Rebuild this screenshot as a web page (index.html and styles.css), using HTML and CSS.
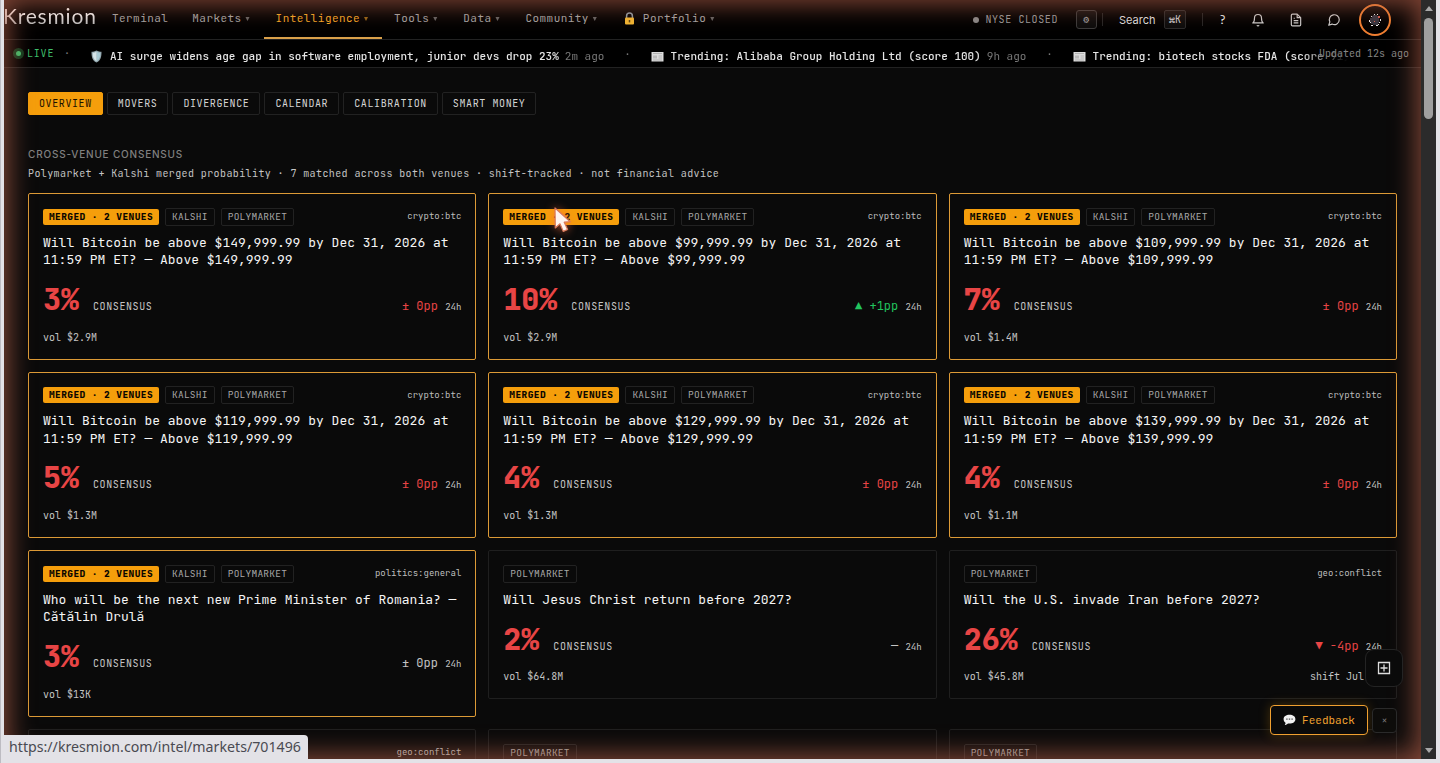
FILE: index.html
```html
<!DOCTYPE html>
<html lang="en">

<head>
    <meta charset="utf-8">
    <meta name="viewport" content="width=device-width, initial-scale=1.0">
    <title>Kresmion</title>
    <link rel="stylesheet" href="styles.css">
</head>

<body>
    <div class="viewport">
        <header class="topbar">
            <div class="logo">Kresmion</div>
            <nav class="nav">
                <a>Terminal</a>
                <a>Markets<i>▾</i></a>
                <a class="active">Intelligence<i>▾</i></a>
                <a>Tools<i>▾</i></a>
                <a>Data<i>▾</i></a>
                <a>Community<i>▾</i></a>
                <a><svg class="lock" width="13" height="13" viewBox="0 0 13 13"><path d="M3.6 6V4a2.9 2.9 0 0 1 5.8 0v2" fill="none" stroke="#8b9aa3" stroke-width="1.5"/><rect x="2" y="5.4" width="9" height="7" rx="1" fill="#f2b632"/><path d="M6.5 8v2.4" stroke="#5b4413" stroke-width="1.5"/></svg>Portfolio<i>▾</i></a>
            </nav>
            <div class="tools">
                <span class="market-state">NYSE CLOSED</span>
                <button class="gear">⚙</button>
                <span class="divider"></span>
                <span class="search">Search</span>
                <kbd>⌘K</kbd>
                <span class="divider second"></span>
                <span class="help">?</span>
                <svg class="icon" viewBox="0 0 24 24"><path d="M18 8.500a6 6 0 0 0-12 0c0 7-3 8.500-3 8.500h18s-3-1.500-3-8.500"/><path d="M13.800 21a2 2 0 0 1-3.600 0"/></svg>
                <svg class="icon" viewBox="0 0 24 24"><path d="M14 2H6a2 2 0 0 0-2 2v16a2 2 0 0 0 2 2h12a2 2 0 0 0 2-2V8z"/><path d="M14 2v6h6M8 13h8M8 17h8M8 9h2"/></svg>
                <svg class="icon" viewBox="0 0 24 24"><path d="M21 11.500a8.400 8.400 0 0 1-12.300 7.500L3 21l1.900-5.700A8.500 8.500 0 1 1 21 11.500z"/></svg>
                <span class="avatar">
                    <svg width="14" height="14" viewBox="0 0 14 14" shape-rendering="crispEdges"><path d="M5 2h4v1h2v7h-1v2H5v-1H3V9H2V5h2V3h1z" fill="#353540"/><path d="M10 3h2v2h-2zM6 8h1v1H6z" fill="#d4574a"/><path d="M6 1h1v1H6zM9 1h1v1H9zM3 3h1v1H3zM1 7h1v2H1zM2 9h1v1H2zM12 6h1v2h-1zM11 9h1v1h-1zM3 12h2v1H3zM8 12h2v1H8zM10 11h1v1h-1z" fill="#eee"/></svg>
                </span>
            </div>
        </header>

        <div class="ticker">
            <span class="live">LIVE</span>
            <span class="dot first">·</span>
            <div class="feed">
                <svg width="13" height="13" viewBox="0 0 13 13"><path d="M6.500 .5c1.700 1 3.400 1.200 5 1.200 0 5-.6 8.600-5 10.800C2.100 10.300 1.500 6.700 1.500 1.700c1.600 0 3.300-.2 5-1.200z" fill="#92a6ad"/><path d="M6.500 1.800c1.200.6 2.500.9 3.800 1 0 3.800-.6 6.700-3.800 8.400z" fill="#a9cbd5"/><path d="M6.500 1.800v9.400C3.300 9.500 2.700 6.600 2.700 2.800c1.300-.1 2.600-.4 3.800-1z" fill="#d5e4e8"/></svg>
                <b>AI surge widens age gap in software employment, junior devs drop 23%</b><em>2m ago</em>
                <span class="dot">·</span>
                <svg width="13" height="13" viewBox="0 0 13 13"><path d="M.5 2h12v9.500H.5z" fill="#dcdcdc"/><path d="M2 3.500h9M7.500 6H11M7.500 8H11M2 10h9" stroke="#b4b4b4"/><path d="M2 5.500h4v3H2z" fill="#bbb"/></svg>
                <b>Trending: Alibaba Group Holding Ltd (score 100)</b><em>9h ago</em>
                <span class="dot">·</span>
                <svg width="13" height="13" viewBox="0 0 13 13"><path d="M.5 2h12v9.500H.5z" fill="#dcdcdc"/><path d="M2 3.500h9M7.500 6H11M7.500 8H11M2 10h9" stroke="#b4b4b4"/><path d="M2 5.500h4v3H2z" fill="#bbb"/></svg>
                <b>Trending: biotech stocks FDA (score 91)</b>
            </div>
            <span class="updated">Updated 12s ago</span>
        </div>

        <main>
            <div class="tabs">
                <a class="selected">OVERVIEW</a>
                <a>MOVERS</a>
                <a>DIVERGENCE</a>
                <a>CALENDAR</a>
                <a>CALIBRATION</a>
                <a>SMART MONEY</a>
            </div>
            <h2>CROSS-VENUE CONSENSUS</h2>
            <p class="lead">Polymarket + Kalshi merged probability · 7 matched across both venues · shift-tracked · not financial advice</p>
            <div class="grid" id="cards"></div>
        </main>

        <div class="glow"></div>
        <button class="apps"><svg width="14" height="14" viewBox="0 0 14 14"><path d="M1.500 1.500h11v11h-11zM7 3.500v7M3.500 7h7" fill="none" stroke="#ddd" stroke-width="1.300"/></svg></button>
        <div class="feedback">
            <button class="feedback-btn"><svg width="13" height="12" viewBox="0 0 13 12"><path d="M6.500 .8c3.400 0 5.900 1.800 5.900 4.400S9.900 9.600 6.500 9.600c-.5 0-1 0-1.500-.1-.8.9-2 1.500-3.300 1.600.6-.7.900-1.500.8-2.400C1.300 7.800.6 6.600.6 5.200.6 2.600 3.100.8 6.500.8z" fill="#f2f2f2"/><path d="M3.200 5.200h1.400M5.800 5.200h1.400M8.400 5.200h1.400" stroke="#555" stroke-width="1.300"/></svg>Feedback</button>
            <button class="dismiss">×</button>
        </div>
        <svg class="cursor" width="26" height="34" viewBox="0 0 26 34"><path d="M5 4l.3 20 4.700-4.200 3.300 7.600 4.300-1.900-3.400-7.300 6-.5z" fill="#fff4ef" stroke="#d9785a" stroke-width="1.200" stroke-linejoin="round"/></svg>
    </div>

    <div class="scrollbar">
        <span class="arrow up"></span>
        <span class="thumb"></span>
        <span class="arrow down"></span>
    </div>
    <div class="link-status">https://kresmion.com/intel/markets/701496</div>

    <script>
        var both = ["KALSHI", "POLYMARKET"];
        var poly = ["POLYMARKET"];

        function btc(price, pct, move, dir, vol) {
            return {
                venues: both, topic: "crypto:btc", pct: pct, move: move, dir: dir, vol: vol,
                title: "Will Bitcoin be above $" + price + " by Dec 31, 2026 at 11:59 PM ET? — Above $" + price
            };
        }

        var markets = [
            btc("149,999.99", 3, "± 0pp", "down", "$2.9M"),
            btc("99,999.99", 10, "▲ +1pp", "up", "$2.9M"),
            btc("109,999.99", 7, "± 0pp", "down", "$1.4M"),
            btc("119,999.99", 5, "± 0pp", "down", "$1.3M"),
            btc("129,999.99", 4, "± 0pp", "down", "$1.3M"),
            btc("139,999.99", 4, "± 0pp", "down", "$1.1M"),
            { venues: both, topic: "politics:general", title: "Who will be the next new Prime Minister of Romania? — Cătălin Drulă", pct: 3, move: "± 0pp", dir: "", vol: "$13K" },
            { venues: poly, topic: "", title: "Will Jesus Christ return before 2027?", pct: 2, move: "—", dir: "", vol: "$64.8M" },
            { venues: poly, topic: "geo:conflict", title: "Will the U.S. invade Iran before 2027?", pct: 26, move: "▼ -4pp", dir: "down", vol: "$45.8M", shift: "shift Jul 12" },
            { venues: [], topic: "geo:conflict" },
            { venues: poly, topic: "" },
            { venues: poly, topic: "" }
        ];

        // Build one card per market
        var html = "";
        for (var i = 0; i < markets.length; i++) {
            var m = markets[i];
            var merged = m.venues.length > 1;
            html += '<article class="card' + (merged ? " merged" : "") + '"><div class="chips">';
            if (merged) {
                html += '<span class="badge">MERGED · 2 VENUES</span>';
            }
            for (var j = 0; j < m.venues.length; j++) {
                html += '<span class="chip">' + m.venues[j] + "</span>";
            }
            html += '<span class="topic">' + m.topic + "</span></div>";
            if (m.title) {
                html += "<h3>" + m.title + "</h3>" +
                    '<div class="odds"><strong>' + m.pct + '%</strong><span class="label">CONSENSUS</span>' +
                    '<span class="move"><span class="' + m.dir + '">' + m.move + "</span> <small>24h</small></span></div>" +
                    '<div class="foot"><span>vol ' + m.vol + "</span><span>" + (m.shift || "") + "</span></div>";
            }
            html += "</article>";
        }
        document.getElementById("cards").innerHTML = html;
    </script>
</body>

</html>
```
FILE: styles.css
```css
* {
    box-sizing: border-box;
}

body {
    margin: 0;
    height: 763px;
    padding: 0 4px 4px 3px;
    display: flex;
    overflow: hidden;
    background: #e3e2e7;
    border-left: 1px solid #bdbcc2;
    font-family: "JetBrains Mono", "DejaVu Sans Mono", monospace;
    color: #f5f5f5;
}

button {
    font-family: inherit;
    padding: 0;
}

.viewport {
    position: relative;
    flex: 1;
    min-width: 0;
    height: 759px;
    overflow: hidden;
    background: #0a0a0a;
}

/* header */
.topbar {
    height: 40px;
    display: flex;
    align-items: center;
    background: #000;
    border-bottom: 1px solid #222;
}

.logo {
    width: 96px;
    font: 400 21px "Lato", sans-serif;
    letter-spacing: 0.800px;
    text-indent: -1px;
    padding-bottom: 8px;
    color: transparent;
    background: linear-gradient(#fff 30%, #888 85%);
    background-clip: text;
}

.nav {
    display: flex;
    height: 39px;
}

.nav a {
    display: flex;
    align-items: center;
    padding: 0 12px 1px;
    border-bottom: 2px solid transparent;
    font-size: 11px;
    letter-spacing: 0.440px;
    color: #a3a3a3;
}

.nav i {
    width: 6px;
    margin-left: 4px;
    font-family: "DejaVu Sans", sans-serif;
    font-size: 8px;
    font-style: normal;
    letter-spacing: 0;
    opacity: 0.6;
}

.nav .active {
    color: #f5a524;
    border-color: #d9a04a;
}

.lock {
    margin-right: 7px;
}

.tools {
    margin-left: auto;
    margin-right: 30px;
    display: flex;
    align-items: center;
}

.market-state {
    display: flex;
    align-items: center;
    font-size: 10px;
    letter-spacing: 0.600px;
    color: #999;
}

.market-state::before {
    content: "";
    width: 6px;
    height: 6px;
    margin-right: 6px;
    border-radius: 50%;
    background: #888;
}

.gear {
    width: 21px;
    height: 19px;
    margin: 0 5px 0 18px;
    border: 1px solid #3a3a3a;
    border-radius: 3px;
    background: #0c0c0c;
    color: #aaa;
    font-size: 10px;
}

.divider {
    width: 1px;
    height: 13px;
    margin-right: 16px;
    background: #242424;
}

.divider.second {
    margin: 0 16px;
}

.search {
    width: 45px;
    font: 11px "Inter", sans-serif;
    color: #ddd;
}

kbd {
    width: 22px;
    height: 19px;
    border: 1px solid #2a2a2a;
    border-radius: 2px;
    background: #0c0c0c;
    font: 10px/17px "JetBrains Mono", "DejaVu Sans Mono", monospace;
    text-align: center;
    color: #ccc;
}

.help {
    width: 32px;
    font-size: 12px;
    color: #ddd;
}

.icon {
    width: 14px;
    height: 14px;
    margin-right: 24px;
    fill: none;
    stroke: #ccc;
    stroke-width: 2;
    stroke-linejoin: round;
}

.avatar {
    width: 32px;
    height: 32px;
    margin-left: -6px;
    display: flex;
    align-items: center;
    justify-content: center;
    border: 2px solid #ef7f32;
    border-radius: 50%;
}

/* news ticker */
.ticker {
    position: relative;
    height: 28px;
    display: flex;
    align-items: center;
    background: #000;
    border-bottom: 1px solid #222;
    overflow: hidden;
}

.live {
    width: 60px;
    padding-left: 12px;
    display: flex;
    align-items: center;
    font-size: 10px;
    letter-spacing: 0.800px;
    color: #3fbf6c;
}

.live::before {
    content: "";
    width: 5px;
    height: 5px;
    margin-right: 6px;
    border-radius: 50%;
    background: #3fbf6c;
    box-shadow: 0 0 0 3px #0d3a1d;
}

.dot {
    width: 46.500px;
    text-align: center;
    font-size: 10px;
    color: #777;
}

.dot.first {
    width: 6px;
    margin-right: 20px;
}

.feed {
    display: flex;
    align-items: center;
    width: 1260px;
    overflow: hidden;
    white-space: nowrap;
    font-size: 11px;
    padding-top: 5px;
    -webkit-mask-image: linear-gradient(90deg, #000 1210px, transparent 1258px);
    mask-image: linear-gradient(90deg, #000 1210px, transparent 1258px);
}

.feed svg {
    flex: none;
    margin-right: 7px;
}

.feed b {
    font-weight: 500;
    color: #e5e5e5;
}

.feed em {
    margin-left: 6px;
    font-style: normal;
    color: #777;
}

.feed .dot {
    margin-bottom: 4px;
}

.updated {
    position: absolute;
    right: 12px;
    top: 7px;
    font-size: 10px;
    color: #858585;
}

/* page */
main {
    padding: 24px 24px 0;
}

.tabs {
    display: flex;
    gap: 4px;
}

.tabs a {
    height: 23px;
    padding: 0 10px;
    border: 1px solid #222;
    border-radius: 2px;
    font-size: 10px;
    line-height: 21px;
    letter-spacing: 0.600px;
    color: #d4d4d4;
}

.tabs .selected {
    background: #f59e0b;
    border-color: #f59e0b;
    color: #1a1000;
}

h2 {
    margin: 32px 0 5px;
    font: 500 10px/15px "Inter", sans-serif;
    letter-spacing: 0.800px;
    color: #808080;
}

.lead {
    margin: 0 0 12px;
    font-size: 10px;
    line-height: 14px;
    letter-spacing: 0.400px;
    color: #c4c4c4;
}

.grid {
    display: grid;
    grid-template-columns: repeat(3, 1fr);
    gap: 12px;
    align-items: start;
}

.card {
    min-height: 100px;
    padding: 14px;
    border: 1px solid #1f1f1f;
    border-radius: 2px;
}

.card.merged {
    border-color: #dc9a36;
}

.chips {
    display: flex;
    align-items: center;
    gap: 6px;
    height: 17px;
    font-size: 9px;
    color: #a8a8a8;
}

.badge {
    height: 16px;
    padding: 0 6px;
    border-radius: 2px;
    background: #f59e0b;
    color: #0a0600;
    font-size: 9.500px;
    font-weight: 800;
    line-height: 15px;
    letter-spacing: 0.420px;
}

.chip {
    height: 18px;
    padding: 0 6px;
    border: 1px solid #222;
    border-radius: 2px;
    font-size: 9.500px;
    line-height: 15px;
    letter-spacing: 0.240px;
}

.topic {
    margin-left: auto;
    padding-bottom: 1px;
    color: #bdbdbd;
}

h3 {
    margin: 8.500px 0 9.200px;
    font-size: 13px;
    font-weight: normal;
    line-height: 17.550px;
}

.odds {
    display: flex;
    align-items: baseline;
    height: 42px;
    margin-bottom: 9.900px;
}

.odds strong {
    margin-right: 14px;
    font-size: 30px;
    font-weight: 800;
    line-height: 42px;
    color: #e84545;
}

.label {
    font-size: 10px;
    letter-spacing: 0.600px;
    color: #c4c4c4;
}

.move {
    margin-left: auto;
    font-size: 12px;
    color: #c4c4c4;
}

.move small {
    font-size: 9px;
}

.up {
    color: #22c55e;
}

.down {
    color: #e84545;
}

.foot {
    display: flex;
    justify-content: space-between;
    font-size: 10px;
    line-height: 15px;
    color: #c4c4c4;
}

/* overlays */
.glow {
    position: absolute;
    inset: 0;
    box-shadow: inset 0 0 26px 4px rgba(185, 98, 75, 0.7);
    pointer-events: none;
}

.apps {
    position: absolute;
    right: 18px;
    bottom: 72px;
    width: 38px;
    height: 38px;
    display: flex;
    align-items: center;
    justify-content: center;
    border: 1px solid #242424;
    border-radius: 9px;
    background: #0a0a0a;
}

.feedback {
    position: absolute;
    right: 24px;
    bottom: 24px;
    display: flex;
    align-items: center;
    gap: 4px;
}

.feedback-btn {
    width: 98px;
    height: 30px;
    display: flex;
    align-items: center;
    justify-content: center;
    gap: 6px;
    border: 1px solid #f0a030;
    border-radius: 4px;
    background: #0a0a0a;
    box-shadow: 0 0 12px rgba(245, 158, 11, 0.25);
    color: #f0a030;
    font-size: 11px;
}

.dismiss {
    width: 25px;
    height: 25px;
    border: 1px solid #2a2a2a;
    border-radius: 4px;
    background: #0d0c0a;
    color: #777;
    font-size: 10px;
}

.cursor {
    position: absolute;
    left: 546px;
    top: 204px;
    filter: drop-shadow(0 0 5px rgba(255, 110, 60, 0.7));
}

.scrollbar {
    width: 15px;
    height: 759px;
    display: flex;
    flex-direction: column;
    align-items: center;
    padding: 6px 0;
    background: #2b2b2b;
}

.arrow {
    border: 4.500px solid transparent;
}

.arrow.up {
    border-top: 0;
    border-bottom: 5px solid #a8a8a8;
}

.arrow.down {
    margin-top: auto;
    border-bottom: 0;
    border-top: 5px solid #a8a8a8;
}

.thumb {
    width: 9px;
    height: 101px;
    margin-top: 7px;
    border-radius: 5px;
    background: #9f9f9f;
}

.link-status {
    position: absolute;
    left: 4px;
    bottom: 0;
    width: 304px;
    height: 28px;
    padding-left: 5px;
    border-top-right-radius: 4px;
    background: #e3e2e7;
    font: 14.200px/23px "Noto Sans", sans-serif;
    color: #4a4a52;
    white-space: nowrap;
}
```
